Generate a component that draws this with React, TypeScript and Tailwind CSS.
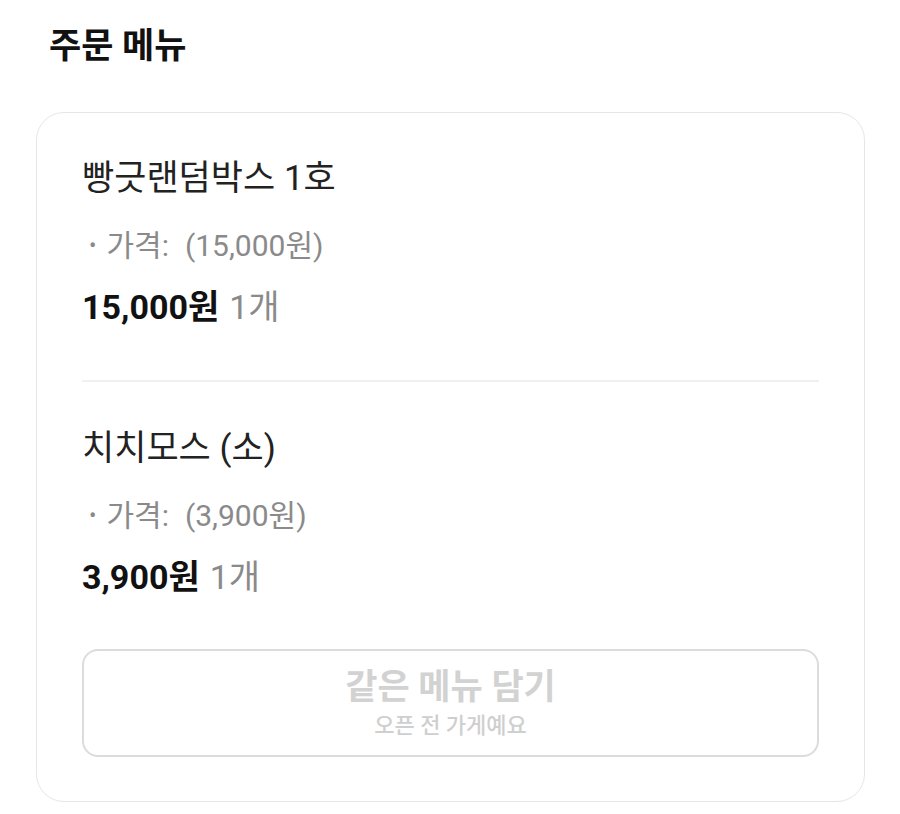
const items = [
  { name: '빵긋랜덤박스 1호', unit: '15,000원', total: '15,000원', qty: '1개' },
  { name: '치치모스 (소)', unit: '3,900원', total: '3,900원', qty: '1개' },
];

export default function App() {
  return (
    <div
      className="w-[900px] h-[814px] bg-white pt-[24px]"
      style={{ fontFamily: 'Roboto, "Noto Sans CJK KR", sans-serif' }}
    >
      <h2 className="pl-[49px] text-[35px] font-bold leading-[46px] text-[#111]">주문 메뉴</h2>
      <div className="ml-[36px] mr-[35px] mt-[42px] rounded-[28px] border-[1.5px] border-[#e6e6e6] px-[45px] pt-[44px] pb-[44px]">
        {items.map((it, i) => (
          <div key={it.name}>
            {i > 0 && <div className="h-[2px] bg-[#f0f0f0]" />}
            <div className={i > 0 ? 'pt-[45px] pb-[50px]' : 'pb-[51px]'}>
              <div className="text-[35px] leading-[44px] text-[#222]">{it.name}</div>
              <div className="mt-[25px] flex items-center text-[30px] leading-[40px] text-[#8a8a8a]">
                <span className="mr-[10px] ml-[7px] text-[22px]">•</span>
                <span>가격:</span>
                <span className="ml-[16px]">({it.unit})</span>
              </div>
              <div className="mt-[19px] text-[34px] leading-[44px]">
                <span className="font-bold text-[#111]">{it.total}</span>
                <span className="ml-[10px] text-[#8a8a8a]">{it.qty}</span>
              </div>
            </div>
          </div>
        ))}
        <button className="flex h-[108px] w-full flex-col items-center justify-center rounded-[16px] border-2 border-[#dcdcdc] bg-white">
          <span className="text-[35px] font-bold leading-[44px] text-[#d2d2d2]">같은 메뉴 담기</span>
          <span className="mt-[2px] text-[22px] font-medium leading-[28px] text-[#cfcfcf]">오픈 전 가게예요</span>
        </button>
      </div>
    </div>
  );
}
